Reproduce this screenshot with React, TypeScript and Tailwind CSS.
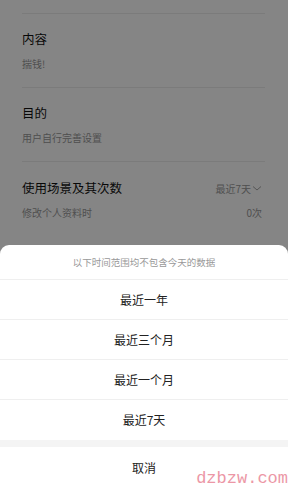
import React from 'react';

const font = { fontFamily: '"Noto Sans CJK SC", "Noto Sans", sans-serif' };

const options = ['最近一年', '最近三个月', '最近一个月', '最近7天'];

function Section({ title, sub }: { title: string; sub: string }) {
  return (
    <div className="border-t border-[#ececec] pt-[16px] pb-[17px]">
      <div className="flex items-center justify-between h-[18px]">
        <span className="text-[12.5px] text-[#111]">{title}</span>
      </div>
      <div className="flex items-center justify-between h-[14px] mt-[8px]">
        <span className="text-[10px] text-[#999]">{sub}</span>
      </div>
    </div>
  );
}

export default function App() {
  return (
    <div className="relative w-[288px] h-[488px] overflow-hidden bg-white" style={font}>
      <div className="pt-[13px] pl-[22px] pr-[23px]">
        <Section title="内容" sub="揣钱!" />
        <Section title="目的" sub="用户自行完善设置" />
        <div className="border-t border-[#ececec] pt-[17px]">
          <div className="flex items-center justify-between h-[18px]">
            <span className="text-[12.5px] text-[#111]">使用场景及其次数</span>
            <span className="flex items-center text-[10px] text-[#999] pr-[3px]">
              最近7天
              <svg width="10" height="10" viewBox="0 0 10 10" className="ml-[1px]">
                <path d="M1 3.5 L5 7 L9 3.5" fill="none" stroke="#999" strokeWidth="0.9" />
              </svg>
            </span>
          </div>
          <div className="flex items-center justify-between h-[14px] mt-[8px]">
            <span className="text-[10px] text-[#999]">修改个人资料时</span>
            <span className="text-[10px] text-[#999] pr-[3px]">0次</span>
          </div>
        </div>
      </div>

      <div className="absolute inset-0 bg-black/[0.48]" />

      <div className="absolute left-0 right-0 bottom-0 bg-white rounded-t-[9px]">
        <div className="h-[35px] flex items-center justify-center text-[9.5px] text-[#999] border-b border-[#efefef]">
          以下时间范围均不包含今天的数据
        </div>
        {options.map((o, i) => (
          <div
            key={o}
            className={
              i < options.length - 1
                ? 'h-[40px] flex items-center justify-center text-[12px] text-[#222] border-b border-[#efefef]'
                : 'h-[40px] flex items-center justify-center text-[12px] text-[#222]'
            }
          >
            {o}
          </div>
        ))}
        <div className="h-[7px] bg-[#f4f4f4]" />
        <div className="h-[41px] flex items-center justify-center text-[12px] text-[#222]">取消</div>
      </div>

      <div
        className="absolute right-0 bottom-[1px] text-[17px] text-[#ec97a6] leading-none"
        style={{ fontFamily: '"Liberation Mono", monospace' }}
      >
        dzbzw.com
      </div>
    </div>
  );
}
